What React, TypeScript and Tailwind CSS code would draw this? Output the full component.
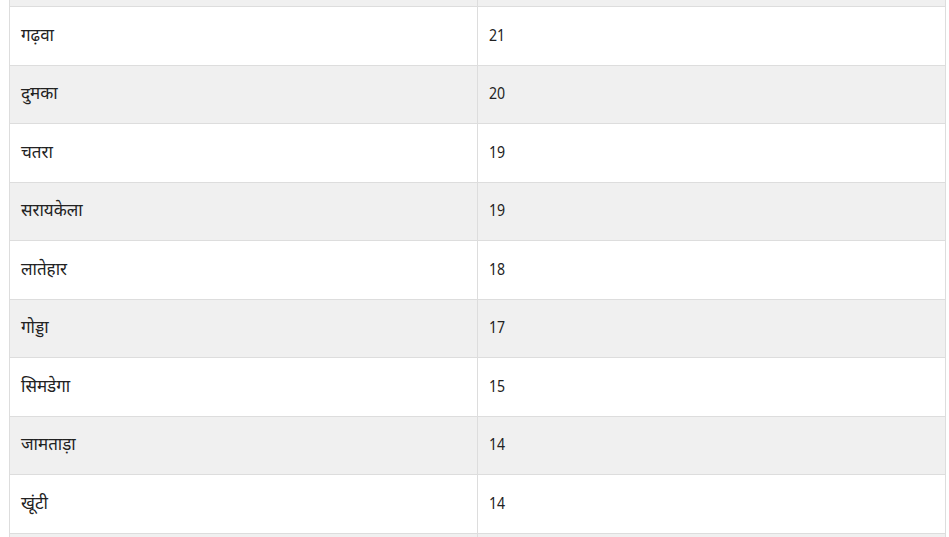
import React from "react";

const rows: [string, string][] = [
  ["गढ़वा", "21"],
  ["दुमका", "20"],
  ["चतरा", "19"],
  ["सरायकेला", "19"],
  ["लातेहार", "18"],
  ["गोड्डा", "17"],
  ["सिमडेगा", "15"],
  ["जामताड़ा", "14"],
  ["खूंटी", "14"],
];

export default function App() {
  return (
    <div className="h-[537px] w-[949px] overflow-hidden bg-white">
      <div
        className="ml-[9px] w-[937px] border-l border-r border-[#dddddd] text-[17px] text-[#222222]"
        style={{ fontFamily: '"Noto Sans", "Noto Sans Devanagari", sans-serif' }}
      >
        <div className="grid h-[7px] grid-cols-2 border-b border-[#dddddd] bg-[#f0f0f0]">
          <div className="border-r border-[#dddddd]" />
          <div />
        </div>
        {rows.map(([name, n], i) => (
          <div
            key={i}
            className={`grid h-[58.56px] grid-cols-2 border-b border-[#dddddd] ${i % 2 === 0 ? "bg-white" : "bg-[#f0f0f0]"}`}
          >
            <div className="flex items-center border-r border-[#dddddd] pb-[3px] pl-[11px]">{name}</div>
            <div className="flex items-center pb-[3px] pl-[11px]">
              <span className="inline-block origin-left scale-x-[0.83]">{n}</span>
            </div>
          </div>
        ))}
        <div className="grid h-[58px] grid-cols-2 border-b border-[#dddddd] bg-[#f0f0f0]">
          <div className="border-r border-[#dddddd]" />
          <div />
        </div>
      </div>
    </div>
  );
}
